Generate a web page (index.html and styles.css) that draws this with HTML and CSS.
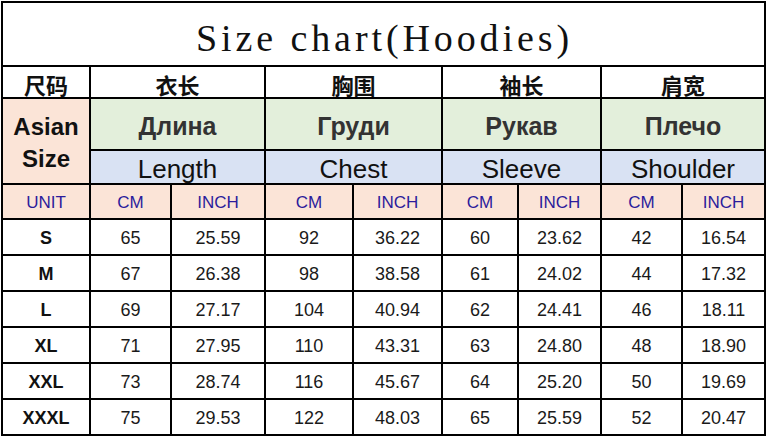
FILE: index.html
```html
<!DOCTYPE html>
<html>
<head>
<meta charset="utf-8">
<link rel="stylesheet" href="styles.css">
</head>
<body>
<div class="chart">
  <div class="cell title">Size chart(Hoodies)</div>

  <div class="cell cn">尺码</div>
  <div class="cell cn span2">衣长</div>
  <div class="cell cn span2">胸围</div>
  <div class="cell cn span2">袖长</div>
  <div class="cell cn span2">肩宽</div>

  <div class="cell asian">Asian<br>Size</div>
  <div class="cell ru span2">Длина</div>
  <div class="cell ru span2">Груди</div>
  <div class="cell ru span2">Рукав</div>
  <div class="cell ru span2">Плечо</div>

  <div class="cell en span2">Length</div>
  <div class="cell en span2">Chest</div>
  <div class="cell en span2">Sleeve</div>
  <div class="cell en span2">Shoulder</div>

  <div class="cell unit">UNIT</div>
  <div class="cell unit">CM</div>
  <div class="cell unit">INCH</div>
  <div class="cell unit">CM</div>
  <div class="cell unit">INCH</div>
  <div class="cell unit">CM</div>
  <div class="cell unit">INCH</div>
  <div class="cell unit">CM</div>
  <div class="cell unit">INCH</div>

  <div class="cell size">S</div>
  <div class="cell num">65</div><div class="cell num">25.59</div>
  <div class="cell num">92</div><div class="cell num">36.22</div>
  <div class="cell num">60</div><div class="cell num">23.62</div>
  <div class="cell num">42</div><div class="cell num">16.54</div>

  <div class="cell size">M</div>
  <div class="cell num">67</div><div class="cell num">26.38</div>
  <div class="cell num">98</div><div class="cell num">38.58</div>
  <div class="cell num">61</div><div class="cell num">24.02</div>
  <div class="cell num">44</div><div class="cell num">17.32</div>

  <div class="cell size">L</div>
  <div class="cell num">69</div><div class="cell num">27.17</div>
  <div class="cell num">104</div><div class="cell num">40.94</div>
  <div class="cell num">62</div><div class="cell num">24.41</div>
  <div class="cell num">46</div><div class="cell num">18.11</div>

  <div class="cell size">XL</div>
  <div class="cell num">71</div><div class="cell num">27.95</div>
  <div class="cell num">110</div><div class="cell num">43.31</div>
  <div class="cell num">63</div><div class="cell num">24.80</div>
  <div class="cell num">48</div><div class="cell num">18.90</div>

  <div class="cell size">XXL</div>
  <div class="cell num">73</div><div class="cell num">28.74</div>
  <div class="cell num">116</div><div class="cell num">45.67</div>
  <div class="cell num">64</div><div class="cell num">25.20</div>
  <div class="cell num">50</div><div class="cell num">19.69</div>

  <div class="cell size">XXXL</div>
  <div class="cell num">75</div><div class="cell num">29.53</div>
  <div class="cell num">122</div><div class="cell num">48.03</div>
  <div class="cell num">65</div><div class="cell num">25.59</div>
  <div class="cell num">52</div><div class="cell num">20.47</div>
</div>
</body>
</html>
```

FILE: styles.css
```css
html, body {
  margin: 0;
  padding: 0;
  background: #fff;
}

body {
  padding: 1px 0 0 1px;
  font-family: "Liberation Sans", Arial, sans-serif;
  color: #111;
}

.chart {
  display: grid;
  width: max-content;
  grid-template-columns: 86px 79px 92px 86px 87px 74px 81px 79px 81px;
  grid-template-rows: 62px 30px 50px 32px 33px repeat(6, 34px);
  gap: 2px;
  padding: 2px;
  background: #000;
}

.cell {
  background: #fff;
  display: flex;
  align-items: center;
  justify-content: center;
  text-align: center;
  line-height: 1;
}

.span2 {
  grid-column: span 2;
}

.title {
  grid-column: 1 / -1;
  font-family: "Liberation Serif", "Times New Roman", serif;
  font-size: 38px;
  letter-spacing: 3.9px;
  color: #111;
  padding-top: 7px;
  padding-left: 2px;
}

.cn {
  font-family: "Noto Sans CJK SC", sans-serif;
  font-weight: 700;
  font-size: 22px;
  color: #111;
  padding-top: 3px;
}

.asian {
  grid-row: span 2;
  background: #fbe4d7;
  font-weight: 700;
  font-size: 24px;
  line-height: 32px;
  color: #111;
  padding-top: 4px;
}

.ru {
  background: #e3efdb;
  font-weight: 700;
  font-size: 25px;
  color: #333;
  padding-top: 4px;
}

.en {
  background: #d9e2f3;
  font-size: 26px;
  color: #111;
  padding-top: 4px;
}

.unit {
  background: #fbe4d7;
  font-size: 17px;
  color: #2b1c9c;
  padding-top: 2px;
}

.size {
  font-weight: 700;
  font-size: 18px;
  padding-top: 1px;
}

.num {
  font-size: 18px;
  color: #1a1a1a;
  padding-top: 1px;
}
```
